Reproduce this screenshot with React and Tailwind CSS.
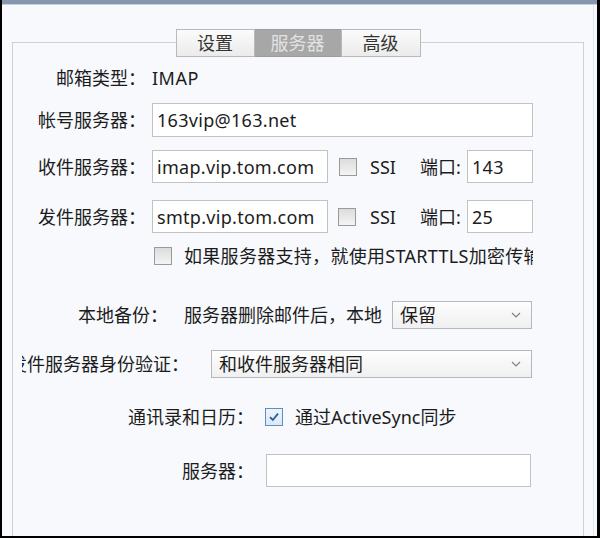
import React from "react";

const Box = ({ checked }) => (
  <span
    className={`w-[18px] h-[18px] shrink-0 border flex items-center justify-center ${
      checked
        ? "border-[#5b8fc7] bg-gradient-to-b from-[#eef4fb] to-[#dde8f5]"
        : "border-[#9a9a9a] bg-gradient-to-b from-[#dcdcdc] to-[#f4f4f4]"
    }`}
  >
    {checked && (
      <svg width="12" height="12" viewBox="0 0 12 12">
        <path d="M2 6.2 L4.8 9 L10 2.6" fill="none" stroke="#2a5d9a" strokeWidth="1.8" />
      </svg>
    )}
  </span>
);

const Chevron = () => (
  <svg width="10" height="6" viewBox="0 0 10 6" className="shrink-0">
    <path d="M1 1 L5 5 L9 1" fill="none" stroke="#808080" strokeWidth="1.2" />
  </svg>
);

const Select = ({ value, width }) => (
  <div
    className={`${width} h-[28px] shrink-0 border border-[#b4b8bd] bg-gradient-to-b from-[#fdfdfd] to-[#f0f0f0] flex items-center justify-between pl-[7px] pr-[10px]`}
  >
    <span>{value}</span>
    <Chevron />
  </div>
);

const Input = ({ value, width, height = "h-[34px]" }) => (
  <div className={`${width} ${height} shrink-0 border border-[#c2c2c2] bg-white flex items-center pl-[4px] tracking-[0.3px]`}>
    {value}
  </div>
);

export default function App() {
  return (
    <div className="w-[600px] h-[538px] bg-black overflow-hidden text-[18px] leading-none text-[#1c1c1c] font-['Noto_Sans','Noto_Sans_CJK_SC',sans-serif]">
      <div className="h-[536px] ml-[2px] mr-[3px] bg-[#f7f9fc] flex flex-col overflow-hidden">
        <div className="h-[5px] shrink-0 bg-[#8597ad] border-b border-[#c9d2dc]" />
        <div className="flex-1 flex overflow-hidden">
          <div className="ml-[10px] mt-[37px] w-[572px] h-[520px] shrink-0 border border-[#cdd1d6]">
            {/* tabs */}
            <div className="flex justify-center -mt-[14px] h-[28px]">
              <div className="w-[79px] h-full border border-[#b9b9b9] bg-gradient-to-b from-[#fbfbfb] to-[#ebebeb] flex items-center justify-center text-[#333]">
                设置
              </div>
              <div className="w-[86px] h-full border-y border-[#9c9c9c] bg-[#a7a7a7] flex items-center justify-center text-[#e2e2e2]">
                服务器
              </div>
              <div className="w-[80px] h-full border border-[#b9b9b9] bg-gradient-to-b from-[#fbfbfb] to-[#ebebeb] flex items-center justify-center text-[#333]">
                高级
              </div>
            </div>

            {/* 邮箱类型 */}
            <div className="flex items-center h-[24px] mt-[9px]">
              <span className="w-[133px] text-right">邮箱类型：</span>
              <span className="ml-[6px] tracking-[0.5px]">IMAP</span>
            </div>

            <div className="flex items-center mt-[13px]">
              <span className="w-[133px] text-right">帐号服务器：</span>
              <div className="ml-[6px]">
                <Input value="163vip@163.net" width="w-[381px]" />
              </div>
            </div>

            <div className="flex items-center mt-[13px]">
              <span className="w-[133px] text-right">收件服务器：</span>
              <div className="ml-[6px]">
                <Input value="imap.vip.tom.com" width="w-[176px]" height="h-[33px]" />
              </div>
              <span className="ml-[11px]">
                <Box />
              </span>
              <span className="ml-[13px] w-[50px]">SSI</span>
              <span className="w-[47px]">端口:</span>
              <Input value="143" width="w-[66px]" height="h-[33px]" />
            </div>

            <div className="flex items-center mt-[17px]">
              <span className="w-[133px] text-right">发件服务器：</span>
              <div className="ml-[6px]">
                <Input value="smtp.vip.tom.com" width="w-[176px]" height="h-[33px]" />
              </div>
              <span className="ml-[10px]">
                <Box />
              </span>
              <span className="ml-[14px] w-[50px]">SSI</span>
              <span className="w-[47px]">端口:</span>
              <Input value="25" width="w-[66px]" height="h-[33px]" />
            </div>

            <div className="flex items-center h-[22px] mt-[12px] pl-[141px]">
              <Box />
              <span className="ml-[12px] w-[349px] overflow-hidden whitespace-nowrap tracking-[0.3px]">
                如果服务器支持，就使用STARTTLS加密传输
              </span>
            </div>

            {/* 本地备份 */}
            <div className="flex items-center mt-[34px] pl-[65px]">
              <span className="w-[106px]">本地备份：</span>
              <span className="w-[208px] whitespace-nowrap">服务器删除邮件后，本地</span>
              <Select value="保留" width="w-[140px]" />
            </div>

            <div className="flex items-center mt-[21px]">
              <div className="ml-[9px] w-[167px] flex justify-end overflow-hidden whitespace-nowrap">
                <span className="shrink-0">发件服务器身份验证：</span>
              </div>
              <div className="ml-[22px]">
                <Select value="和收件服务器相同" width="w-[321px]" />
              </div>
            </div>

            {/* 通讯录 */}
            <div className="flex items-center h-[24px] mt-[27px]">
              <span className="w-[241px] text-right">通讯录和日历：</span>
              <span className="ml-[11px]">
                <Box checked />
              </span>
              <span className="ml-[12px]">通过ActiveSync同步</span>
            </div>

            <div className="flex items-center mt-[25px]">
              <span className="w-[241px] text-right">服务器：</span>
              <div className="ml-[12px]">
                <Input value="" width="w-[265px]" height="h-[33px]" />
              </div>
            </div>
          </div>
          <div className="w-[10px] shrink-0 border-r border-[#e1e5ea]" />
        </div>
      </div>
    </div>
  );
}
